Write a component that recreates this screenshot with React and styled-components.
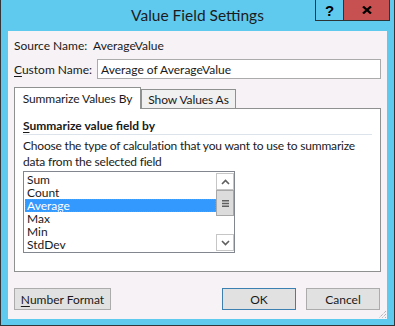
import React from 'react';
import styled, { createGlobalStyle } from 'styled-components';

const FONT = `"Lato", "Noto Sans", "Liberation Sans", sans-serif`;

const Global = createGlobalStyle`
  html, body { margin: 0; padding: 0; background: #ffffff; }
  body { font-family: ${FONT}; }
  * { box-sizing: border-box; }
`;

const Window = styled.div`
  width: 395px;
  height: 326px;
  border: 1px solid #333638;
  border-top: none;
  background: #60c9ee;
  display: flex;
  flex-direction: column;
  font-family: ${FONT};
  font-size: 12px;
  color: #1a1a1a;
`;

const TitleBar = styled.div`
  height: 31px;
  flex: none;
  display: grid;
  grid-template-columns: 1fr auto 1fr;
  align-items: start;
  padding: 0 4px;
`;

const Title = styled.div`
  grid-column: 2;
  font-size: 15.5px;
  line-height: 30px;
  color: #1c1c1c;
  white-space: nowrap;
`;

const CaptionButtons = styled.div`
  grid-column: 3;
  justify-self: end;
  display: flex;
  height: 21px;
  border: 1px solid #2d3436;
  border-top: none;
`;

const CaptionButton = styled.div`
  width: ${(p) => p.$w}px;
  height: 100%;
  display: flex;
  align-items: center;
  justify-content: center;
  background: ${(p) => (p.$close ? '#c75050' : 'transparent')};
  border-left: ${(p) => (p.$divider ? '1px solid #2d3436' : 'none')};
  font-weight: 900;
  font-size: 15px;
  color: #000;
  font-family: "Liberation Sans", sans-serif;
`;

const Frame = styled.div`
  flex: 1;
  display: flex;
  padding: 0 7px 6px;
`;

const Content = styled.div`
  flex: 1;
  position: relative;
  background: #f6f2f6;
  display: flex;
  flex-direction: column;
  padding: 0 6px;
`;

const FieldRow = styled.div`
  display: flex;
  align-items: center;
  height: 20px;
  margin-top: 4px;
`;

const Label = styled.div`
  width: ${(p) => p.$w}px;
  flex: none;
  white-space: nowrap;
`;

const Value = styled.div`
  white-space: nowrap;
`;

const Accel = styled.span`
  text-decoration: underline;
  text-underline-offset: 2px;
`;

const TextInput = styled.div`
  flex: 1;
  height: 20px;
  border: 1px solid #ababab;
  background: #ffffff;
  display: flex;
  align-items: center;
  padding-left: 3px;
  white-space: nowrap;
`;

const TabRow = styled.div`
  display: flex;
  align-items: flex-end;
  height: 22px;
  margin-top: 8px;
  margin-bottom: -1px;
`;

const Tab = styled.div`
  width: ${(p) => p.$w}px;
  height: ${(p) => (p.$active ? 22 : 20)}px;
  border: 1px solid #8f9090;
  border-bottom: none;
  background: ${(p) => (p.$active ? '#ffffff' : '#f0f0f0')};
  position: ${(p) => (p.$active ? 'relative' : 'static')};
  z-index: ${(p) => (p.$active ? 1 : 'auto')};
  display: flex;
  align-items: center;
  justify-content: center;
  padding-bottom: ${(p) => (p.$active ? 1 : 0)}px;
  white-space: nowrap;
  letter-spacing: -0.1px;
`;

const Panel = styled.div`
  height: 164px;
  border: 1px solid #8f9090;
  background: #ffffff;
  padding: 0 8px;
  display: flex;
  flex-direction: column;
`;

const Heading = styled.div`
  margin-top: 9px;
  line-height: 16px;
  font-weight: 700;
  border-bottom: 1px solid #dde3ea;
  white-space: nowrap;
`;

const Description = styled.div`
  margin-top: 3px;
  line-height: 16px;
  letter-spacing: -0.2px;
`;

const ListBox = styled.div`
  margin-top: 1px;
  width: 212px;
  height: 82px;
  border: 1px solid #82878f;
  padding: 1px 0 1px 1px;
  display: flex;
`;

const Items = styled.div`
  flex: 1;
  display: flex;
  flex-direction: column;
`;

const Item = styled.div`
  height: 13px;
  line-height: 13px;
  padding-left: 2px;
  white-space: nowrap;
  background: ${(p) => (p.$selected ? '#3399ff' : 'transparent')};
  color: ${(p) => (p.$selected ? '#ffffff' : '#1a1a1a')};
  outline: ${(p) => (p.$selected ? '1px dotted #b98a58' : 'none')};
  outline-offset: -1px;
`;

const ScrollBar = styled.div`
  width: 18px;
  display: flex;
  flex-direction: column;
`;

const ScrollPart = styled.div`
  height: ${(p) => p.$h}px;
  flex: none;
  border: ${(p) => (p.$kind === 'track' ? 'none' : p.$kind === 'thumb' ? '1px solid #a8a8a8' : '1px solid #c6c6c6')};
  background: ${(p) => (p.$kind === 'thumb' ? '#dcdcdc' : '#ffffff')};
  display: flex;
  align-items: center;
  justify-content: center;
`;

const ButtonRow = styled.div`
  display: flex;
  align-items: center;
  margin-top: 16px;
  padding-right: 1px;
  gap: 10px;
`;

const Button = styled.div`
  width: ${(p) => p.$w}px;
  height: 22px;
  border: 1px solid ${(p) => (p.$default ? '#3c7fb1' : '#acacac')};
  background: #e1e1e1;
  display: flex;
  align-items: center;
  justify-content: center;
  white-space: nowrap;
  margin-right: ${(p) => (p.$push ? 'auto' : '0')};
`;

const Grip = styled.svg`
  position: absolute;
  right: 0;
  bottom: 0;
`;

const Chevron = ({ up }) => (
  <svg width="9" height="6" viewBox="0 0 9 6">
    <path
      d={up ? 'M1 5 L4.5 1.5 L8 5' : 'M1 1 L4.5 4.5 L8 1'}
      fill="none"
      stroke="#5f5f5f"
      strokeWidth="1.6"
    />
  </svg>
);

const GripLines = () => (
  <svg width="7" height="7" viewBox="0 0 7 7">
    <rect x="0" y="0" width="7" height="1.5" fill="#5f5f5f" />
    <rect x="0" y="2.75" width="7" height="1.5" fill="#5f5f5f" />
    <rect x="0" y="5.5" width="7" height="1.5" fill="#5f5f5f" />
  </svg>
);

const items = ['Sum', 'Count', 'Average', 'Max', 'Min', 'StdDev'];

export default function App() {
  return (
    <>
      <Global />
      <Window>
        <TitleBar>
          <Title>Value Field Settings</Title>
          <CaptionButtons>
            <CaptionButton $w={27}>?</CaptionButton>
            <CaptionButton $w={46} $close $divider>
              <svg width="10" height="8" viewBox="0 0 10 8">
                <path d="M1 0.5 L9 7.5 M9 0.5 L1 7.5" stroke="#000" strokeWidth="2.3" />
              </svg>
            </CaptionButton>
          </CaptionButtons>
        </TitleBar>
        <Frame>
          <Content>
            <FieldRow>
              <Label $w={79}>Source Name:</Label>
              <Value>AverageValue</Value>
            </FieldRow>
            <FieldRow>
              <Label $w={83}>
                <Accel>C</Accel>ustom Name:
              </Label>
              <TextInput>Average of AverageValue</TextInput>
            </FieldRow>
            <TabRow>
              <Tab $w={127} $active>Summarize Values By</Tab>
              <Tab $w={95}>Show Values As</Tab>
            </TabRow>
            <Panel>
              <Heading>
                <Accel>S</Accel>ummarize value field by
              </Heading>
              <Description>
                Choose the type of calculation that you want to use to summarize
                <br />
                data from the selected field
              </Description>
              <ListBox>
                <Items>
                  {items.map((it) => (
                    <Item key={it} $selected={it === 'Average'}>
                      {it}
                    </Item>
                  ))}
                </Items>
                <ScrollBar>
                  <ScrollPart $h={17} $kind="button">
                    <Chevron up />
                  </ScrollPart>
                  <ScrollPart $h={26} $kind="thumb">
                    <GripLines />
                  </ScrollPart>
                  <ScrollPart $h={18} $kind="track" />
                  <ScrollPart $h={17} $kind="button">
                    <Chevron />
                  </ScrollPart>
                </ScrollBar>
              </ListBox>
            </Panel>
            <ButtonRow>
              <Button $w={97} $push>
                <span>
                  <Accel>N</Accel>umber Format
                </span>
              </Button>
              <Button $w={74} $default>OK</Button>
              <Button $w={74}>Cancel</Button>
            </ButtonRow>
            <Grip width="9" height="9" viewBox="0 0 9 9">
              <path d="M8 1 L1 8 M8 4 L4 8 M8 7 L7 8" stroke="#9a9a9a" strokeWidth="1" strokeDasharray="1 1" />
            </Grip>
          </Content>
        </Frame>
      </Window>
    </>
  );
}
